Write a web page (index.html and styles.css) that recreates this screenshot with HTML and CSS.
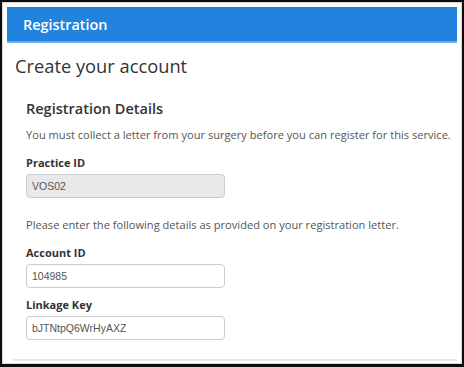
FILE: index.html
```html
<!DOCTYPE html>
<html lang="en">
<head>
  <meta charset="UTF-8">
  <meta name="viewport" content="width=device-width, initial-scale=1.0">
  <title>Registration</title>
  <link rel="stylesheet" href="styles.css">
</head>
<body>

  <div class="window">
    <div class="topbar">Registration</div>

    <div class="page">
      <h1>Create your account</h1>

      <div class="panel">
        <h2>Registration Details</h2>
        <p class="intro">You must collect a letter from your surgery before you can register for this service.</p>

        <label for="practiceId">Practice ID</label>
        <input type="text" id="practiceId" value="VOS02" disabled>

        <p class="note">Please enter the following details as provided on your registration letter.</p>

        <label for="accountId">Account ID</label>
        <input type="text" id="accountId" value="104985">

        <label for="linkageKey" class="gap-small">Linkage Key</label>
        <input type="text" id="linkageKey" value="bJTNtpQ6WrHyAXZ">
      </div>
    </div>
  </div>

</body>
</html>
```

FILE: styles.css
```css
html, body {
  height: 100%;
}
body {
  margin: 0;
  padding: 2px;
  box-sizing: border-box;
  background-color: #0d0d0d;
  font-family: "Open Sans", Arial, sans-serif;
  color: #333;
}
.window {
  height: 362px;
  width: 460px;
  box-sizing: border-box;
  background-color: #fff;
  border: 1px solid #d8d8d8;
  padding: 4px;
  overflow: hidden;
}
.topbar {
  height: 32px;
  line-height: 32px;
  padding: 2px 0 0 16px;
  background-color: #2183de;
  border-bottom: 2px solid #6aaee8;
  color: #fff;
  font-size: 14.4px;
  font-weight: 600;
}
h1 {
  margin: 11px 0 0 8px;
  font-size: 18.3px;
  line-height: 24px;
  font-weight: 400;
  color: #333;
}
.panel {
  margin: 20px 0 0 6px;
  padding: 0 0 19px 13px;
  border-bottom: 2px solid #e8e8e8;
}
h2 {
  margin: 0;
  font-size: 14.5px;
  line-height: 22px;
  font-weight: 600;
  color: #333;
}
p {
  margin: 0;
  font-size: 11.1px;
  line-height: 18px;
  color: #555;
}
.intro {
  margin-top: 6px;
}
.note {
  margin-top: 18px;
}
label {
  display: block;
  margin-top: 10px;
  font-size: 11px;
  line-height: 18px;
  font-weight: 700;
  color: #333;
}
label.gap-small {
  margin-top: 8px;
}
input {
  display: block;
  width: 199px;
  height: 24px;
  margin-top: 2px;
  padding: 0 5px;
  box-sizing: border-box;
  border: 1px solid #ccc;
  border-radius: 4px;
  background-color: #fff;
  font-family: "Liberation Sans", Arial, sans-serif;
  font-size: 10.5px;
  color: #555;
}
input:disabled {
  background-color: #e9e9e9;
  color: #555;
}
```
